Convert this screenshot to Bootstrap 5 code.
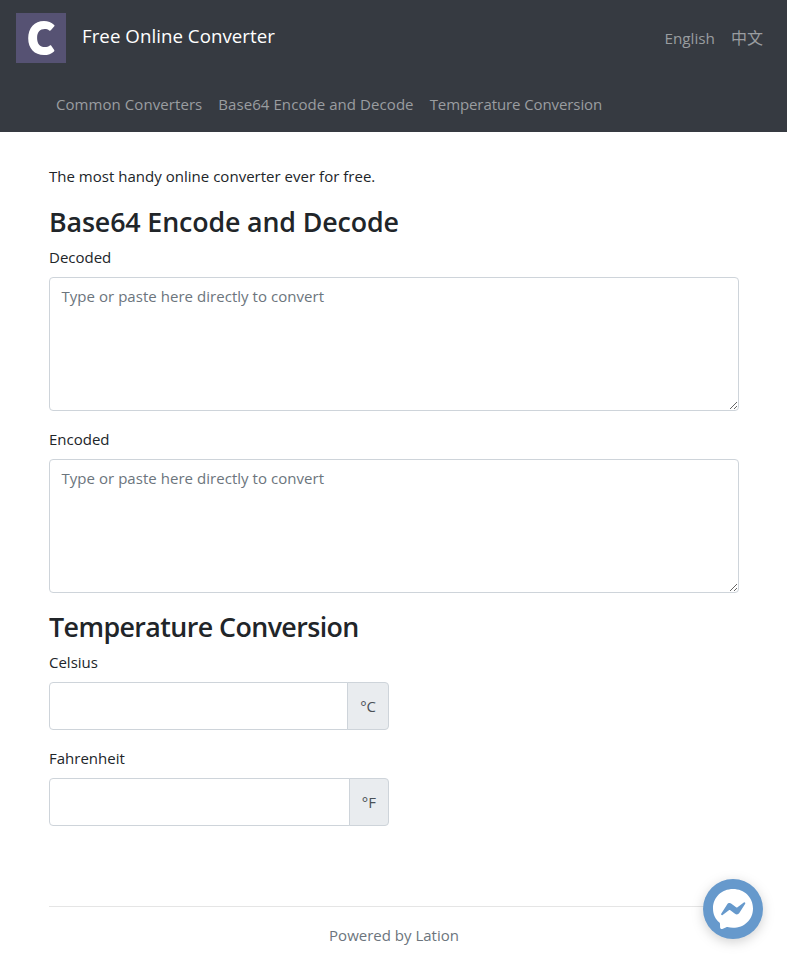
<!DOCTYPE html>
<html lang="en">
<head>
<meta charset="utf-8">
<meta name="viewport" content="width=device-width, initial-scale=1">
<title>Free Online Converter</title>
<link href="https://cdn.jsdelivr.net/npm/bootstrap@5.3.0/dist/css/bootstrap.min.css" rel="stylesheet">
<style>
body{font-family:"Segoe UI","Open Sans","Noto Sans CJK SC",sans-serif;font-size:15px;line-height:24px;color:#212529;overflow:hidden}
.site-head{background:#363a41;height:132px;padding:8px 16px}
.site-head .nav-link{color:#9a9da0;padding:8px;line-height:24px;white-space:nowrap}
.site-title{font-size:18.7px;line-height:30px;color:#fff;padding-bottom:4px;letter-spacing:.04px}
.top-row{height:60px}
.top-row .nav-link{font-size:15.3px}
.site-head .zh-link{font-size:16px;font-family:"Noto Sans CJK SC",sans-serif;line-height:22px}
.sub-nav{margin:16px 0 0 32px}
.sub-nav .nav-link{letter-spacing:.07px}
.sub-nav .nav-link:last-child{letter-spacing:-.09px}
.page{width:690px;margin:0 0 0 49px;padding-top:32px}
.page h2{font-size:26.8px;line-height:34px;font-weight:600;margin:0 0 6px;padding-top:1px;letter-spacing:-.14px}
.page .temp-title{letter-spacing:-.58px}
.page p{margin-bottom:16px;letter-spacing:.02px}
.form-label{display:block;margin-bottom:8px}
.form-control,.input-group-text{border-color:#ced4da;border-radius:4px;font-size:15px;line-height:24px}
.form-control::placeholder{color:#6c757d;letter-spacing:.04px}
textarea.form-control{height:134px;padding:6px 11.5px}
.temp{width:340px;height:48px}
.input-group-text{background:#e9ecef;color:#495057;padding:0 12px}
.rule{border-top:1px solid #e5e5e5;margin-top:80px;padding-top:16px}
.chat{right:24px;bottom:24px;width:60px;height:60px;filter:drop-shadow(0 3px 6px rgba(0,0,0,.18))}
</style>
</head>
<body>
<header class="site-head">
  <div class="top-row d-flex align-items-center">
    <svg width="50" height="50" viewBox="0 0 50 50" aria-label="Logo"><rect width="50" height="50" fill="#565273"/><path d="M38.200 11.900C35.500 9.200 32 7.900 28 7.900 18.500 7.900 12.200 15 12.200 25.200 12.200 35.500 18.500 42 28 42c4 0 7.600-1.200 10-3.600.5-.5.5-1 .2-1.500L35.300 32.700c-.4-.6-1-.6-1.500-.2-1.300 1-3 1.500-4.900 1.500-5 0-7.800-3.300-7.800-9.100 0-5.500 2.900-8.800 7.600-8.800 1.800 0 3.200.5 4.500 1.400.6.400 1.200.4 1.600-.2l3.500-4.100c.4-.5.4-.9-.1-1.300z" fill="#fff"/></svg>
    <a class="site-title text-decoration-none ms-3" href="#">Free Online Converter</a>
    <nav class="nav ms-auto"><a class="nav-link" href="#">English</a><a class="nav-link zh-link" href="#" lang="zh">中文</a></nav>
  </div>
  <nav class="nav sub-nav flex-nowrap"><a class="nav-link" href="#">Common Converters</a><a class="nav-link" href="#">Base64 Encode and Decode</a><a class="nav-link" href="#">Temperature Conversion</a></nav>
</header>
<main class="page">
  <p>The most handy online converter ever for free.</p>
  <h2>Base64 Encode and Decode</h2>
  <label class="form-label" for="dec">Decoded</label>
  <textarea class="form-control mb-3" id="dec" placeholder="Type or paste here directly to convert"></textarea>
  <label class="form-label" for="enc">Encoded</label>
  <textarea class="form-control mb-3" id="enc" placeholder="Type or paste here directly to convert"></textarea>
  <h2 class="temp-title">Temperature Conversion</h2>
  <label class="form-label" for="cel">Celsius</label>
  <div class="input-group temp mb-3"><input class="form-control" id="cel"><span class="input-group-text">°C</span></div>
  <label class="form-label" for="fah">Fahrenheit</label>
  <div class="input-group temp"><input class="form-control" id="fah"><span class="input-group-text">°F</span></div>
  <footer class="rule text-center text-secondary">Powered by Lation</footer>
</main>
<a class="chat position-fixed" href="#" aria-label="Chat"><svg class="d-block" width="60" height="60" viewBox="0 0 60 60"><circle cx="30" cy="30" r="30" fill="#6699cc"/><path d="M30 10C18.700 10 10 18.300 10 29.400c0 5.900 2.400 10.600 6.400 14.200.4.400.6.800.6 1.300l.1 3.600c0 1.100 1.200 1.900 2.200 1.400l4-1.700c.4-.2.7-.2 1.100-.1 1.800.5 3.700.7 5.600.7 11.300 0 20-8.300 20-19.400S41.300 10 30 10z" fill="#fff"/><path d="M18.200 34.800l5.900-9.300c.9-1.500 2.900-1.900 4.300-.8l4.700 3.500c.4.300 1 .3 1.400 0l6.300-4.800c.8-.6 1.900.4 1.400 1.300l-5.900 9.300c-.9 1.500-2.900 1.900-4.300.8l-4.700-3.500c-.4-.3-1-.3-1.400 0l-6.300 4.800c-.8.6-1.900-.4-1.400-1.300z" fill="#6699cc"/></svg></a>
<script src="https://cdn.jsdelivr.net/npm/bootstrap@5.3.0/dist/js/bootstrap.bundle.min.js"></script>
</body>
</html>
